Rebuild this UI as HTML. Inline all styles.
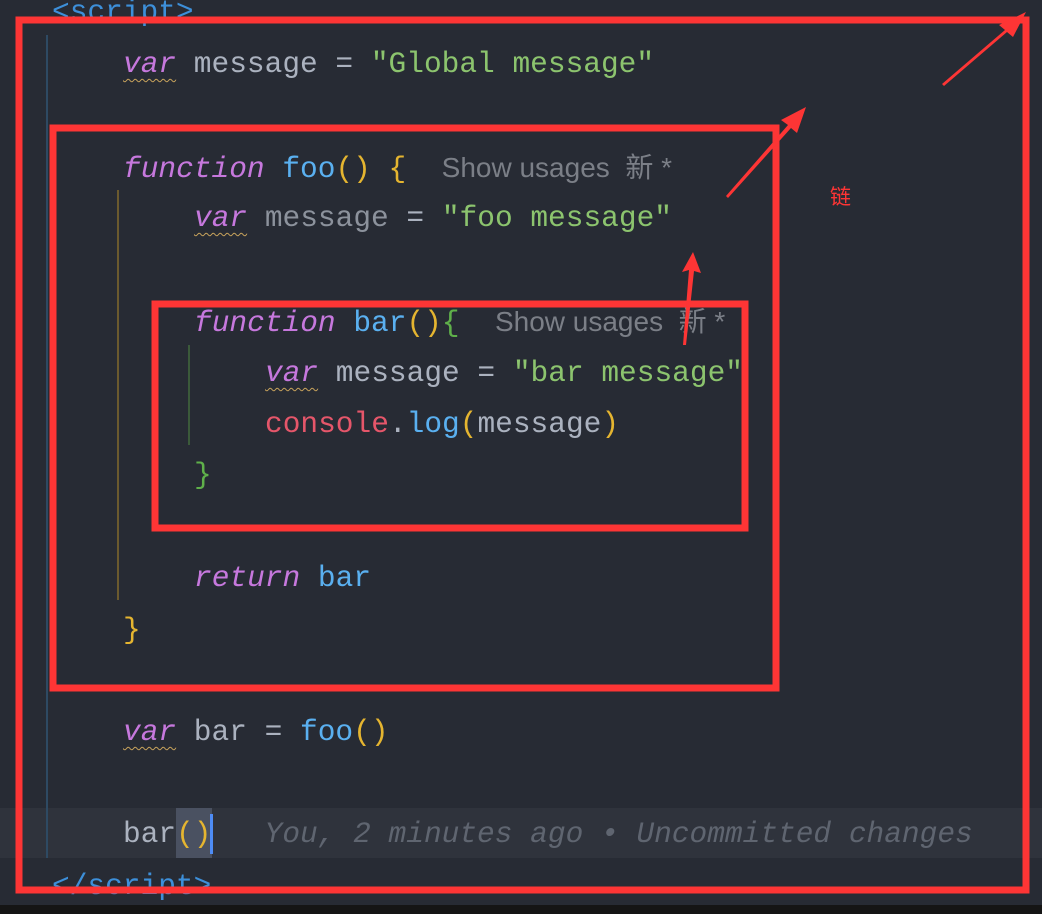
<!DOCTYPE html>
<html><head><meta charset="utf-8"><style>
html,body{margin:0;padding:0}
body{width:1042px;height:914px;background:#272b34;position:relative;overflow:hidden;font-family:"Liberation Mono",monospace;}
.l{position:absolute;height:51px;line-height:51px;font-size:29.5px;white-space:pre;color:#abb2bf;}
.k{color:#c678dd;font-style:italic}
.kv{color:#c678dd;font-style:italic;text-decoration:underline wavy #c9a45c;text-decoration-thickness:1px;text-underline-offset:6px}
.s{color:#8cc46e}
.f{color:#5ab0f0}
.p{color:#e5b530}
.g{color:#5fb04a}
.r{color:#e5566a}
.dim{color:#8c929c}
.h{font-family:"Liberation Sans","Noto Sans CJK SC",sans-serif;color:#7b7f87;font-size:28px;}
.t{color:#3d8fd9}
.guide{position:absolute;width:2px}
</style></head><body>
<div style="position:absolute;left:0;top:808px;width:1042px;height:50px;background:#2f333c"></div>
<div style="position:absolute;left:0;top:905px;width:1042px;height:9px;background:#151515"></div>
<div class="guide" style="left:46px;top:35px;height:823px;background:#2e4a63"></div>
<div class="guide" style="left:117px;top:190px;height:410px;background:#6b5a2e"></div>
<div class="guide" style="left:188px;top:345px;height:100px;background:#3b5a3a"></div>

<div class="l t" style="left:52px;top:-13px">&lt;script&gt;</div>
<div class="l" style="left:123px;top:39px"><span class="kv">var</span> message = <span class="s">"Global message"</span></div>
<div class="l" style="left:123px;top:142px"><span class="k">function</span> <span class="f">foo</span><span class="p">()</span> <span class="p">{</span>  <span class="h">Show usages &nbsp;新 *</span></div>
<div class="l" style="left:194px;top:193px"><span class="kv">var</span> <span class="dim">message</span> = <span class="s">"foo message"</span></div>
<div class="l" style="left:194px;top:296px"><span class="k">function</span> <span class="f">bar</span><span class="p">()</span><span class="g">{</span>  <span class="h">Show usages &nbsp;新 *</span></div>
<div class="l" style="left:265px;top:348px"><span class="kv">var</span> message = <span class="s">"bar message"</span></div>
<div class="l" style="left:265px;top:399px"><span class="r">console</span>.<span class="f">log</span><span class="p">(</span>message<span class="p">)</span></div>
<div class="l g" style="left:194px;top:450px">}</div>
<div class="l" style="left:194px;top:553px"><span class="k">return</span> <span class="f">bar</span></div>
<div class="l p" style="left:123px;top:605px">}</div>
<div class="l" style="left:123px;top:707px"><span class="kv">var</span> bar = <span class="f">foo</span><span class="p">()</span></div>
<div style="position:absolute;left:176px;top:808px;width:36px;height:50px;background:#4a5161"></div>
<div style="position:absolute;left:210px;top:814px;width:3px;height:40px;background:#4e8cf5"></div>
<div class="l" style="left:123px;top:809px">bar<span class="p">()</span>   <span style="color:#5f6570;font-style:italic">You, 2 minutes ago • Uncommitted changes</span></div>
<div class="l t" style="left:52px;top:861px">&lt;/script&gt;</div>

<svg width="1042" height="914" style="position:absolute;left:0;top:0">
<g fill="none" stroke="#fd3535" stroke-width="7">
<rect x="19" y="20" width="1007" height="870"/>
<rect x="53" y="128" width="723" height="560"/>
<rect x="155" y="304" width="590" height="224"/>
</g>
<g fill="#fd3535">
<polygon points="942,84 1005,30 999,25 1026,12 1013,37 1007,32 944,86"/>
<polygon points="726,196 788,125 781,120 806,107 797,133 791,128 728,198"/>
<polygon points="683,345 689,270 682,272 693,252 701,273 694,271 686,345"/>
</g>
<text x="830" y="204" fill="#fd3535" font-size="21" font-family="Noto Sans CJK SC,sans-serif">链</text>
</svg>
</body></html>
